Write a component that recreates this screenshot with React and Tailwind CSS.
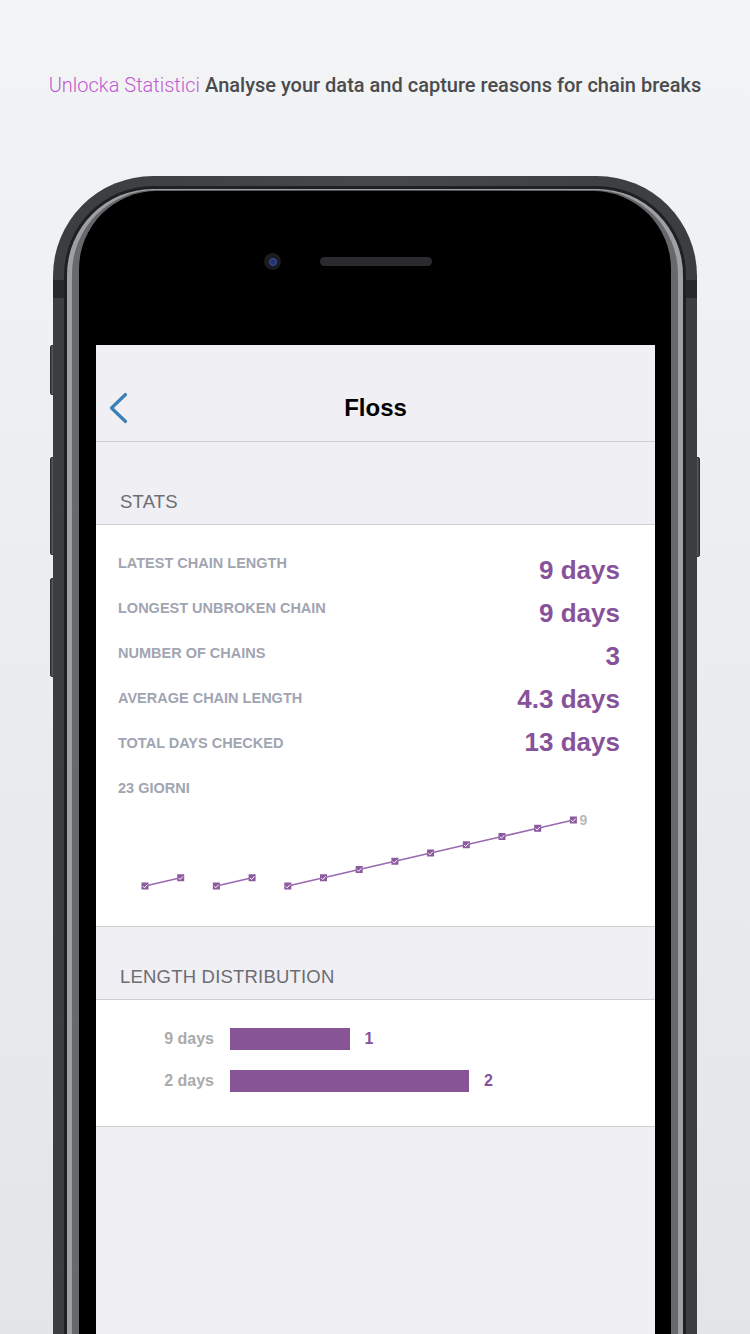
import React from 'react';

const stats = [
  { label: 'LATEST CHAIN LENGTH', value: '9 days' },
  { label: 'LONGEST UNBROKEN CHAIN', value: '9 days' },
  { label: 'NUMBER OF CHAINS', value: '3' },
  { label: 'AVERAGE CHAIN LENGTH', value: '4.3 days' },
  { label: 'TOTAL DAYS CHECKED', value: '13 days' },
];

// chains of consecutive days, each value is the running length
const chains = [
  [1, 2],
  [1, 2],
  [1, 2, 3, 4, 5, 6, 7, 8, 9],
];

const distribution = [
  { label: '9 days', count: 1 },
  { label: '2 days', count: 2 },
];

function Marker({ x, y }) {
  return (
    <g>
      <rect x={x - 3.5} y={y - 3.5} width="7" height="7" fill="#8b5a9f" />
      <path d={`M${x - 2.2} ${y + 0.2} l1.6 1.6 l2.9 -3.2`} stroke="#ffffff" strokeWidth="1" fill="none" />
    </g>
  );
}

function ChainChart() {
  const px = (i) => 49 + i * 35.7;
  const py = (v) => 80 - (v - 1) * 8.25;
  let idx = 0;
  const lines = chains.map((c) =>
    c.map((v) => {
      const p = { x: px(idx), y: py(v) };
      idx += 1;
      return p;
    })
  );
  const tail = lines[lines.length - 1];
  const last = tail[tail.length - 1];

  return (
    <svg className="block mt-[10px]" width="559" height="100" viewBox="0 0 559 100">
      {lines.map((pts, i) => (
        <polyline
          key={i}
          points={pts.map((p) => `${p.x},${p.y}`).join(' ')}
          fill="none"
          stroke="#9a69b1"
          strokeWidth="1.6"
        />
      ))}
      {lines.flat().map((p, i) => (
        <Marker key={i} x={p.x} y={p.y} />
      ))}
      <text x={last.x + 6} y={last.y + 5} fontSize="14" fontWeight="700" fill="#b9b9b9" fontFamily="Liberation Sans, Arial, sans-serif">
        9
      </text>
    </svg>
  );
}

function Phone() {
  return (
    <div className="relative ml-[53px] mt-[79px] w-[644px]">
      {/* side buttons */}
      <div className="absolute -left-[3px] top-[169px] w-[5px] h-[50px] rounded-l-[2px] bg-gradient-to-r from-[#3a3b3e] to-[#77787b] border border-[#2a2b2d]" />
      <div className="absolute -left-[3px] top-[281px] w-[5px] h-[98px] rounded-l-[2px] bg-gradient-to-r from-[#3a3b3e] to-[#77787b] border border-[#2a2b2d]" />
      <div className="absolute -left-[3px] top-[402px] w-[5px] h-[99px] rounded-l-[2px] bg-gradient-to-r from-[#3a3b3e] to-[#77787b] border border-[#2a2b2d]" />
      <div className="absolute -right-[3px] top-[281px] w-[5px] h-[100px] rounded-r-[2px] bg-gradient-to-l from-[#3a3b3e] to-[#77787b] border border-[#2a2b2d]" />

      <div className="relative rounded-t-[100px] bg-gradient-to-r from-[#3c3d40] via-[#47484b] to-[#3c3d40] pl-[11px] pr-[11px] pt-[10px]">
        {/* antenna bands */}
        <div className="absolute left-0 top-[104px] w-[11px] h-[18px] bg-[#27282b]" />
        <div className="absolute right-0 top-[104px] w-[11px] h-[18px] bg-[#27282b]" />
        <div className="rounded-t-[89px] bg-[#1f2022] px-[3px] pt-[3px]">
          <div className="rounded-t-[86px] bg-[#9fa0a3] px-[5px] pt-[1px]">
            <div className="rounded-t-[84px] bg-gradient-to-r from-[#68696c] via-[#4a4b4e] to-[#68696c] px-[7px] pt-[1px]">
              <div className="rounded-t-[78px] bg-black pl-[17px] pr-[16px]">
                <div className="h-[154px] flex items-start pt-[62px] pl-[168px]">
                  <div className="w-[17px] h-[17px] rounded-full bg-[#1b1c20] flex items-center justify-center">
                    <div className="w-[8px] h-[8px] rounded-full bg-[#23336e] border border-[#3a4fa0]" />
                  </div>
                  <div className="ml-[39px] mt-[4px] w-[112px] h-[9px] rounded-full bg-[#2b2b2d]" />
                </div>
                <Screen />
              </div>
            </div>
          </div>
        </div>
      </div>
    </div>
  );
}

function Screen() {
  return (
    <div className="w-[559px] h-[989px] bg-[#efeff4] font-['Liberation_Sans',Arial,sans-serif]">
      {/* nav bar */}
      <div className="h-[97px] border-b border-[#cfced3] pt-[37px]">
        <div className="h-[52px] grid grid-cols-[1fr_auto_1fr] items-center">
          <div className="pl-[12px] flex items-center">
            <svg width="20" height="32" viewBox="0 0 20 32" fill="none">
              <path d="M17.5 2.5 L3.5 16 L17.5 29.5" stroke="#3b80b4" strokeWidth="3.2" strokeLinecap="round" strokeLinejoin="round" />
            </svg>
          </div>
          <div className="text-[24px] font-bold text-black leading-[28px]">Floss</div>
          <div />
        </div>
      </div>

      {/* stats header */}
      <div className="h-[83px] border-b border-[#cfced3] flex items-end pb-[11px] pl-[24px]">
        <span className="text-[18.5px] leading-[22px] tracking-[0.2px] text-[#6d6d72]">STATS</span>
      </div>

      {/* stats */}
      <div className="bg-white border-b border-[#cfced3] pt-[26px] pb-[20px]">
        <div className="flex justify-between pl-[22px] pr-[35px]">
          <div className="flex flex-col">
            {stats.map((s) => (
              <span key={s.label} className="h-[45px] pt-[4px] text-[14.5px] leading-[16px] font-bold text-[#a1a5b2]">
                {s.label}
              </span>
            ))}
            <span className="pt-[4px] text-[14.5px] leading-[16px] font-bold text-[#a1a5b2]">23 GIORNI</span>
          </div>
          <div className="flex flex-col items-end pt-[4px]">
            {stats.map((s) => (
              <span key={s.label} className="h-[43px] text-[26px] leading-[30px] font-bold text-[#87529a]">
                {s.value}
              </span>
            ))}
          </div>
        </div>
        <ChainChart />
      </div>

      {/* distribution header */}
      <div className="h-[73px] border-b border-[#cfced3] flex items-end pb-[11px] pl-[24px]">
        <span className="text-[18.5px] leading-[22px] tracking-[0.2px] text-[#6d6d72]">LENGTH DISTRIBUTION</span>
      </div>

      {/* distribution */}
      <div className="bg-white border-b border-[#cfced3] pt-[28px] pb-[34px] flex flex-col gap-[20px]">
        {distribution.map((d) => (
          <div key={d.label} className="h-[22px] flex items-center">
            <span className="w-[118px] text-right text-[16px] font-bold text-[#ababab] leading-[22px]">{d.label}</span>
            <div className="ml-[16px] h-[22px] bg-[#875495]" style={{ width: `${d.count * 119.5}px` }} />
            <span className="ml-[15px] text-[16px] font-bold text-[#87529a] leading-[22px]">{d.count}</span>
          </div>
        ))}
      </div>
    </div>
  );
}

export default function App() {
  return (
    <div className="w-[750px] h-[1334px] overflow-hidden bg-gradient-to-b from-[#f2f4f6] to-[#e2e6e9]">
      <p className="pt-[73px] text-center text-[20px] leading-[24px] font-['Roboto',sans-serif] whitespace-nowrap">
        <span className="font-light text-[#c25ad0]">Unlocka Statistici</span>{' '}
        <span className="font-medium text-[#4b4b4d]">Analyse your data and capture reasons for chain breaks</span>
      </p>
      <Phone />
    </div>
  );
}
